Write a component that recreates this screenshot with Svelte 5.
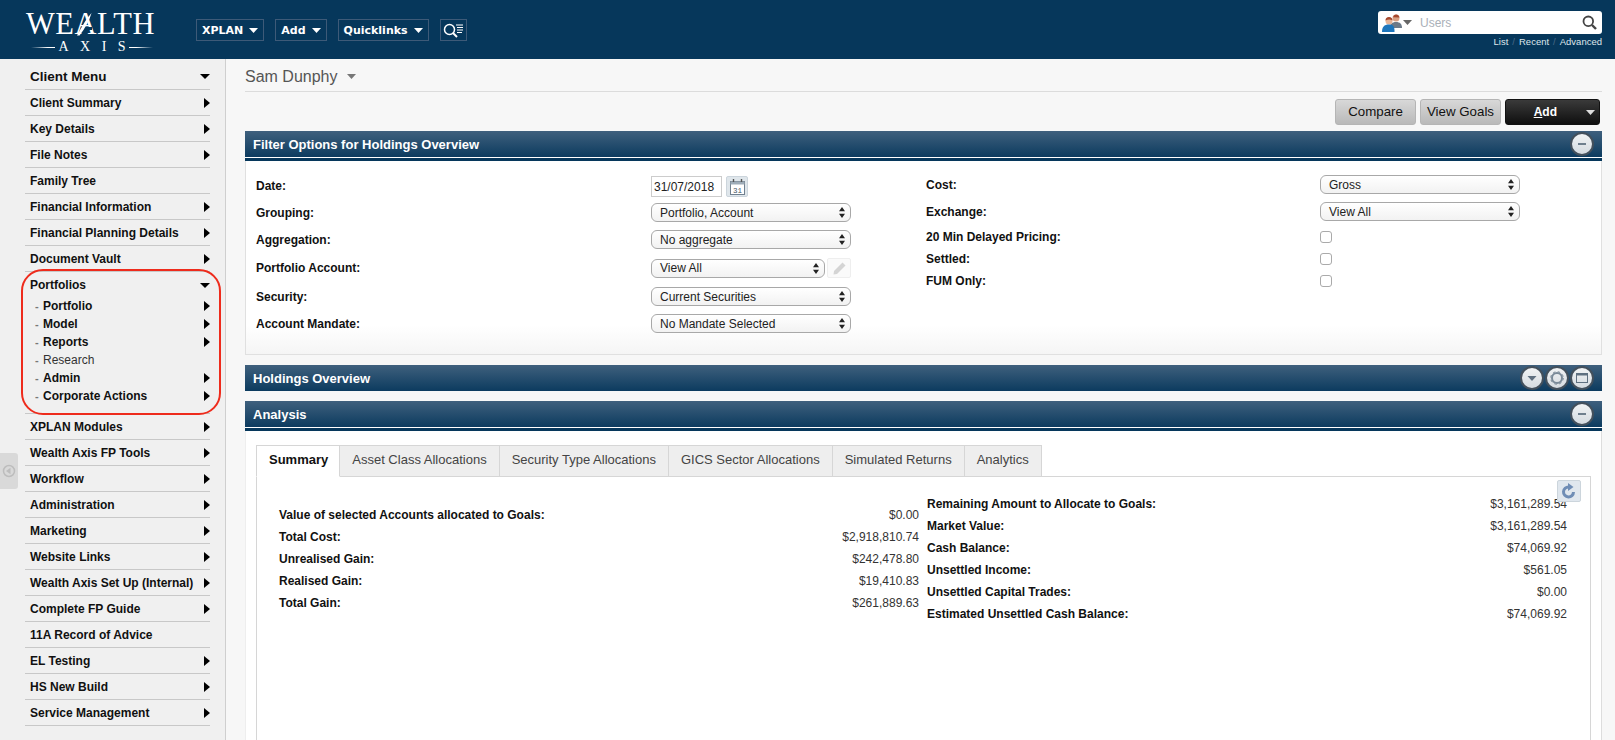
<script>
  const menuTop = [
    { t: 'Client Summary', a: 1 }, { t: 'Key Details', a: 1 }, { t: 'File Notes', a: 1 }, { t: 'Family Tree', a: 0 },
    { t: 'Financial Information', a: 1 }, { t: 'Financial Planning Details', a: 1 }, { t: 'Document Vault', a: 1 }
  ];
  const subs = [
    { t: 'Portfolio', a: 1 }, { t: 'Model', a: 1 }, { t: 'Reports', a: 1 }, { t: 'Research', a: 0 }, { t: 'Admin', a: 1 }, { t: 'Corporate Actions', a: 1 }
  ];
  const menuBottom = [
    { t: 'XPLAN Modules', a: 1 }, { t: 'Wealth Axis FP Tools', a: 1 }, { t: 'Workflow', a: 1 }, { t: 'Administration', a: 1 },
    { t: 'Marketing', a: 1 }, { t: 'Website Links', a: 1 }, { t: 'Wealth Axis Set Up (Internal)', a: 1 }, { t: 'Complete FP Guide', a: 1 },
    { t: '11A Record of Advice', a: 0 }, { t: 'EL Testing', a: 1 }, { t: 'HS New Build', a: 1 }, { t: 'Service Management', a: 1 }
  ];
  const tabs = ['Summary', 'Asset Class Allocations', 'Security Type Allocations', 'GICS Sector Allocations', 'Simulated Returns', 'Analytics'];
  const leftVals = [
    ['Value of selected Accounts allocated to Goals:', '$0.00'], ['Total Cost:', '$2,918,810.74'], ['Unrealised Gain:', '$242,478.80'],
    ['Realised Gain:', '$19,410.83'], ['Total Gain:', '$261,889.63']
  ];
  const rightVals = [
    ['Remaining Amount to Allocate to Goals:', '$3,161,289.54'], ['Market Value:', '$3,161,289.54'], ['Cash Balance:', '$74,069.92'],
    ['Unsettled Income:', '$561.05'], ['Unsettled Capital Trades:', '$0.00'], ['Estimated Unsettled Cash Balance:', '$74,069.92']
  ];
</script>

{#snippet arrowRight()}
  <svg class="ar" width="6" height="10" viewBox="0 0 6 10"><path d="M0 0L6 5L0 10Z" fill="#000" /></svg>
{/snippet}
{#snippet arrowDown(color, w = 9, h = 5)}
  <svg class="ad" width={w} height={h} viewBox="0 0 9 5" preserveAspectRatio="none"><path d="M0 0H9L4.5 5Z" fill={color} /></svg>
{/snippet}
{#snippet sel(text)}
  <div class="select">
    <span>{text}</span>
    <svg width="6" height="11" viewBox="0 0 6 11"><path d="M3 0L6 4.300H0ZM3 11L0 6.700H6Z" fill="#222" /></svg>
  </div>
{/snippet}
{#snippet round(kind)}
  <span class="round">
    {#if kind === 'minus'}
      <svg width="10" height="10" viewBox="0 0 10 10"><rect x="1" y="4" width="8" height="2" fill="#6f7f8d" /></svg>
    {:else if kind === 'down'}
      <svg width="10" height="10" viewBox="0 0 10 10"><path d="M0.500 3H9.500L5 8Z" fill="#5f7080" /></svg>
    {:else if kind === 'gear'}
      <svg width="16" height="16" viewBox="0 0 16 16" fill="none"><circle cx="8" cy="8" r="5" stroke="#7a8a98" stroke-width="2" /><circle cx="8" cy="8" r="6.300" stroke="#7a8a98" stroke-width="1" stroke-dasharray="2.500 2.450" /></svg>
    {:else}
      <svg width="12" height="10" viewBox="0 0 12 10"><rect x="0.500" y="0.500" width="11" height="9" fill="none" stroke="#5f7080" /><rect x="0.500" y="0.500" width="11" height="2" fill="#5f7080" /></svg>
    {/if}
  </span>
{/snippet}

<div class="page">
  <header class="top">
    <div class="logo">
      <div class="wealth">WEALTH</div>
      <svg class="swoosh" width="24" height="28" viewBox="0 0 24 28">
        <path d="M6 17.500H16" stroke="#06375b" stroke-width="3" />
        <path d="M1 24.500C5 17 10 8 15.500 2C13.500 9 9.500 17 3.500 24.500Z" fill="#fff" />
      </svg>
      <div class="axis"><i></i><span>AXIS</span><i class="r"></i></div>
    </div>
    <nav class="nav">
      <span class="nb">XPLAN {@render arrowDown('#fff', 9, 5)}</span>
      <span class="nb">Add {@render arrowDown('#fff', 9, 5)}</span>
      <span class="nb">Quicklinks {@render arrowDown('#fff', 9, 5)}</span>
      <span class="nb ic">
        <svg width="21" height="15" viewBox="0 0 21 15" fill="none"><circle cx="6.500" cy="6.500" r="5" stroke="#fff" stroke-width="1.500" /><path d="M10 10L14 14" stroke="#fff" stroke-width="2" /><path d="M13 2H20M14 4.500H20M14 7H20M14 9.500H19" stroke="#fff" stroke-width="1" /></svg>
      </span>
    </nav>
    <div class="searchwrap">
      <div class="search">
        <svg class="people" width="24" height="20" viewBox="0 0 24 20">
          <circle cx="15" cy="5" r="3.500" fill="#d9a184" /><path d="M15 1.500a3.500 3.500 0 0 1 3.400 3L12 4.200a3.500 3.500 0 0 1 3-2.700Z" fill="#a5482e" />
          <path d="M9 15c0-4 2-6 6-6s6 2 6 6Z" fill="#6d7a88" />
          <circle cx="8" cy="8" r="3.500" fill="#e5b397" /><path d="M4.500 7.500a3.500 3.500 0 0 1 7 0C9 6 7 6.500 4.500 7.500Z" fill="#a5482e" />
          <path d="M1 19c0-5 2-7.500 7-7.500s5.500 2.500 5.500 7.500Z" fill="#1d75bb" />
        </svg>
        {@render arrowDown('#666', 9, 5)}
        <span class="ph">Users</span>
        <svg class="mag" width="15" height="15" viewBox="0 0 15 15" fill="none"><circle cx="6.300" cy="6.300" r="4.800" stroke="#444" stroke-width="1.800" /><path d="M10 10L14 14" stroke="#444" stroke-width="2.400" /></svg>
      </div>
      <div class="links"><span>List</span><b>/</b><span>Recent</span><b>/</b><span>Advanced</span></div>
    </div>
  </header>

  <div class="body">
    <aside class="side">
      <div class="row head"><span>Client Menu</span>{@render arrowDown('#000', 10, 5)}</div>
      {#each menuTop as m}
        <div class="row"><span>{m.t}</span>{#if m.a}{@render arrowRight()}{/if}</div>
      {/each}
      <div class="block">
        <div class="row nob"><span>Portfolios</span>{@render arrowDown('#000', 10, 5)}</div>
        <div class="subs">
          {#each subs as s}
            <div class="sub" class:plain={!s.a}><em>-</em><span>{s.t}</span>{#if s.a}{@render arrowRight()}{/if}</div>
          {/each}
        </div>
        <div class="ring"></div>
      </div>
      {#each menuBottom as m}
        <div class="row"><span>{m.t}</span>{#if m.a}{@render arrowRight()}{/if}</div>
      {/each}
    </aside>
    <div class="collapse">
      <svg width="14" height="14" viewBox="0 0 14 14" fill="none"><circle cx="7" cy="7" r="5.500" stroke="#bdbdbd" stroke-width="1.500" /><path d="M8.500 3.800V10.200L4 7Z" fill="#bdbdbd" /></svg>
    </div>

    <main class="main">
      <div class="who"><span>Sam Dunphy</span>{@render arrowDown('#777', 9, 5)}</div>
      <div class="actions">
        <button class="btn">Compare</button>
        <button class="btn">View Goals</button>
        <button class="btn dark"><span><u>A</u>dd</span>{@render arrowDown('#ddd', 9, 5)}</button>
      </div>

      <div class="bar"><span>Filter Options for Holdings Overview</span><div class="rounds">{@render round('minus')}</div></div>
      <div class="rule"></div>
      <section class="filters">
        <div class="fcol">
          <div class="f first"><label>Date:</label><div class="ctl"><span class="date">31/07/2018</span>
            <span class="cal"><svg width="17" height="17" viewBox="0 0 17 17" fill="none"><rect x="1.500" y="3.500" width="14" height="13" fill="#fff" stroke="#70808f" /><rect x="1.500" y="3.500" width="14" height="3" fill="#9eacb8" /><path d="M4.500 1V4M12.500 1V4" stroke="#555" stroke-width="1.400" /><text x="8.500" y="14.500" font-size="7.500" font-family="Liberation Mono" text-anchor="middle" fill="#456">31</text></svg></span></div></div>
          <div class="f"><label>Grouping:</label><div class="ctl">{@render sel('Portfolio, Account')}</div></div>
          <div class="f"><label>Aggregation:</label><div class="ctl">{@render sel('No aggregate')}</div></div>
          <div class="f pa"><label>Portfolio Account:</label><div class="ctl short">{@render sel('View All')}
            <span class="pencil"><svg width="15" height="15" viewBox="0 0 15 15"><path d="M10.500 1.500L13.500 4.500L5 13L1.500 13.500L2 10Z" fill="#d4d4d4" /></svg></span></div></div>
          <div class="f gap"><label>Security:</label><div class="ctl">{@render sel('Current Securities')}</div></div>
          <div class="f"><label>Account Mandate:</label><div class="ctl">{@render sel('No Mandate Selected')}</div></div>
        </div>
        <div class="fcol right">
          <div class="f"><label>Cost:</label><div class="ctl">{@render sel('Gross')}</div></div>
          <div class="f"><label>Exchange:</label><div class="ctl">{@render sel('View All')}</div></div>
          <div class="f chk c1"><label>20 Min Delayed Pricing:</label><div class="ctl"><i class="box"></i></div></div>
          <div class="f chk"><label>Settled:</label><div class="ctl"><i class="box"></i></div></div>
          <div class="f chk"><label>FUM Only:</label><div class="ctl"><i class="box"></i></div></div>
        </div>
      </section>

      <div class="bar mt"><span>Holdings Overview</span><div class="rounds">{@render round('down')}{@render round('gear')}{@render round('win')}</div></div>
      <div class="bar mt"><span>Analysis</span><div class="rounds">{@render round('minus')}</div></div>
      <div class="rule"></div>
      <section class="analysis">
        <div class="tabs">
          {#each tabs as t, i}
            <span class="tab" class:on={i === 0}>{t}</span>
          {/each}
        </div>
        <div class="tabbody">
          <span class="refresh"><svg width="16" height="16" viewBox="0 0 16 16" fill="none"><path d="M12.500 9A5 5 0 1 1 8 4" stroke="#6f8db5" stroke-width="3" /><path d="M7 0L12.500 4L7 8Z" fill="#6f8db5" /></svg></span>
          <div class="vals l">
            {#each leftVals as v}<div class="v"><b>{v[0]}</b><span>{v[1]}</span></div>{/each}
          </div>
          <div class="vals">
            {#each rightVals as v}<div class="v"><b>{v[0]}</b><span>{v[1]}</span></div>{/each}
          </div>
        </div>
      </section>
    </main>
  </div>
</div>

<style>
  :global(body) { margin: 0; background: #f7f7f7; }
  .page { width: 1615px; height: 740px; overflow: hidden; font-family: "Liberation Sans", Arial, sans-serif; font-size: 12px; color: #222; position: relative; }
  .top { height: 59px; background: #06375b; display: flex; align-items: flex-start; position: relative; }
  .logo { width: 130px; margin: 10px 0 0 25px; position: relative; color: #fff; font-family: "Liberation Serif", serif; flex: none; }
  .wealth { font-size: 30.500px; line-height: 28px; margin-left: 1px; letter-spacing: 0.500px; }
  .swoosh { position: absolute; left: 51px; top: 1px; }
  .axis { display: flex; align-items: center; justify-content: space-between; margin: 2px 2px 0 6px; font-size: 14px; line-height: 14px; }
  .axis span { letter-spacing: 11.500px; margin-right: -11.500px; }
  .axis i { width: 24px; height: 1px; background: linear-gradient(90deg, rgba(255,255,255,0), #fff 70%); }
  .axis i.r { background: linear-gradient(270deg, rgba(255,255,255,0), #fff 70%); }
  .nav { display: flex; gap: 11px; margin: 19px 0 0 41px; }
  .nb { height: 20px; border: 1px solid #3d5a78; display: flex; align-items: center; gap: 6px; padding: 0 5px; color: #fff; font: bold 11px "DejaVu Sans", sans-serif; }
  .nb.ic { padding: 0 2px; }
  .searchwrap { margin-left: auto; margin-right: 13px; margin-top: 11px; width: 224px; }
  .search { height: 23px; background: #fff; border-radius: 3px; display: flex; align-items: center; padding: 0 5px 0 3px; box-sizing: border-box; gap: 2px; }
  .people { margin-right: -4px; }
  .ph { color: #aab0b8; font-size: 12px; margin-left: 6px; }
  .mag { margin-left: auto; }
  .links { display: flex; justify-content: flex-end; gap: 4px; color: #dfe6eb; font-size: 9.500px; line-height: 12px; margin-top: 2px; }
  .links b { font-weight: normal; color: #4a6a88; }
  .body { display: flex; height: 681px; position: relative; }
  .side { width: 226px; flex: none; box-sizing: border-box; background: #f0f0f0; border-right: 1px solid #cfcfcf; padding: 0 0 0 25px; }
  .row { width: 185px; height: 26px; box-sizing: border-box; border-bottom: 1px solid #c8c8c8; display: flex; align-items: center; justify-content: space-between; padding-left: 5px; font-weight: bold; font-size: 12px; color: #111; }
  .row.head { height: 31px; font-size: 13.500px; padding-top: 4px; }
  .row.nob { border-bottom: 0; }
  .block { position: relative; height: 142px; width: 185px; border-bottom: 1px solid #c8c8c8; box-sizing: border-box; }
  .subs { margin-top: -1px; }
  .sub { height: 18px; display: flex; align-items: center; padding-left: 10px; font-weight: bold; font-size: 12px; color: #111; }
  .sub em { font-style: normal; color: #777; width: 8px; font-weight: bold; font-size: 11px; }
  .sub span { flex: 1; }
  .sub.plain span { font-weight: normal; color: #333; }
  .ring { position: absolute; left: -4px; top: -3px; width: 196px; height: 142px; border: 2px solid #ee2b1c; border-radius: 22px; pointer-events: none; }
  .collapse { position: absolute; left: 0; top: 394px; width: 18px; height: 36px; background: #d9d9d9; border-radius: 0 3px 3px 0; display: flex; align-items: center; justify-content: center; }
  .main { flex: 1; padding: 0 13px 0 19px; min-width: 0; }
  .who { height: 33px; box-sizing: border-box; border-bottom: 1px solid #dcdcdc; display: flex; align-items: center; gap: 9px; font-size: 16px; color: #555; padding-top: 3px; }
  .actions { display: flex; justify-content: flex-end; gap: 4px; margin-top: 7px; padding-right: 2px; }
  .btn { height: 26px; width: 81px; padding: 0 0 2px; border: 1px solid #b5b5b5; border-radius: 3px; background: linear-gradient(#d8d8d8, #b9b9b9); font: 13.300px "Liberation Sans", sans-serif; color: #111; }
  .btn.dark { width: 95px; padding: 0 4px 0 0; background: linear-gradient(#3a3a3a, #0f0f0f); border-color: #111; color: #fff; font-weight: bold; font-size: 12px; display: flex; align-items: center; justify-content: flex-end; gap: 29px; }
  .bar { height: 26px; margin-top: 6px; background: linear-gradient(#3f607d, #0c3b5f); display: flex; align-items: center; justify-content: space-between; padding: 0 8px; color: #fff; font-weight: bold; font-size: 13px; }
  .bar.mt { margin-top: 10px; }
  .bar + .rule { height: 3px; border-top: 1px solid #fff; background: #06375b; }
  .rounds { display: flex; gap: 1px; }
  .round { width: 20px; height: 20px; border: 2px solid #43505c; border-radius: 50%; background: linear-gradient(#f1f3f4, #d5dbe0); display: flex; align-items: center; justify-content: center; }
  .filters { height: 194px; box-sizing: border-box; background: linear-gradient(#fff 85%, #f5f5f5); border: 1px solid #e0e0e0; border-top: 0; display: flex; padding: 15px 0 0 10px; }
  .fcol { width: 670px; display: flex; flex-direction: column; gap: 8px; }
  .fcol.right { margin-top: -1px; }
  .f { display: flex; align-items: center; min-height: 19px; }
  .f.first { margin-bottom: -2px; }
  .f.first label { padding-bottom: 2px; }
  .f.pa { margin-top: 1px; }
  .f.gap { margin-top: 1px; }
  .f.chk { min-height: 14px; }
  .f.c1 { margin-top: 1px; }
  .f label { width: 395px; font-weight: bold; font-size: 12px; color: #111; }
  .right .f label { width: 394px; }
  .ctl { display: flex; align-items: center; width: 200px; }
  .select { flex: 1; height: 19px; box-sizing: border-box; border: 1px solid #a8a8a8; border-radius: 6px; background: linear-gradient(#fff, #f2f2f2); display: flex; align-items: center; justify-content: space-between; padding: 0 5px 0 8px; font-size: 12px; color: #222; }
  .date { width: 71px; height: 21px; box-sizing: border-box; border: 1px solid #ccc; display: flex; align-items: center; padding-left: 2px; font-size: 12px; }
  .cal { width: 22px; height: 21px; margin-left: 4px; box-sizing: border-box; border: 1px solid #ccd5dc; border-radius: 2px; background: #dfe6eb; display: flex; align-items: center; justify-content: center; }
  .pencil { width: 24px; height: 20px; margin-left: 2px; box-sizing: border-box; border: 1px solid #eee; background: #fafafa; border-radius: 2px; display: flex; align-items: center; justify-content: center; }
  .box { width: 12px; height: 12px; box-sizing: border-box; border: 1px solid #aaa; border-radius: 3px; background: #fff; }
  .analysis { background: #fff; height: 320px; border-right: 1px solid #ddd; border-left: 1px solid #eee; padding: 14px 10px 0 10px; }
  .tabs { display: flex; height: 32px; }
  .tab { box-sizing: border-box; height: 32px; border: 1px solid #d6d6d6; border-left: 0; background: #eee; padding: 0 12px 3px; display: flex; align-items: center; font-size: 13px; color: #444; }
  .tab:first-child { border-left: 1px solid #d6d6d6; padding-right: 11px; }
  .tab.on { background: #fff; border-bottom-color: #fff; color: #111; font-weight: bold; position: relative; z-index: 1; }
  .tabbody { margin-top: -1px; border: 1px solid #d6d6d6; height: 290px; position: relative; display: grid; grid-template-columns: 640px 640px; column-gap: 8px; padding: 16px 0 0 22px; box-sizing: border-box; }
  .refresh { position: absolute; right: 9px; top: 3px; width: 22px; height: 20px; border: 1px solid #ccd5dc; border-radius: 2px; background: #e0e7ee; display: flex; align-items: center; justify-content: center; }
  .vals.l { margin-top: 11px; }
  .v { height: 22px; display: flex; align-items: center; justify-content: space-between; font-size: 12px; color: #333; }
  .v b { color: #111; }
</style>
